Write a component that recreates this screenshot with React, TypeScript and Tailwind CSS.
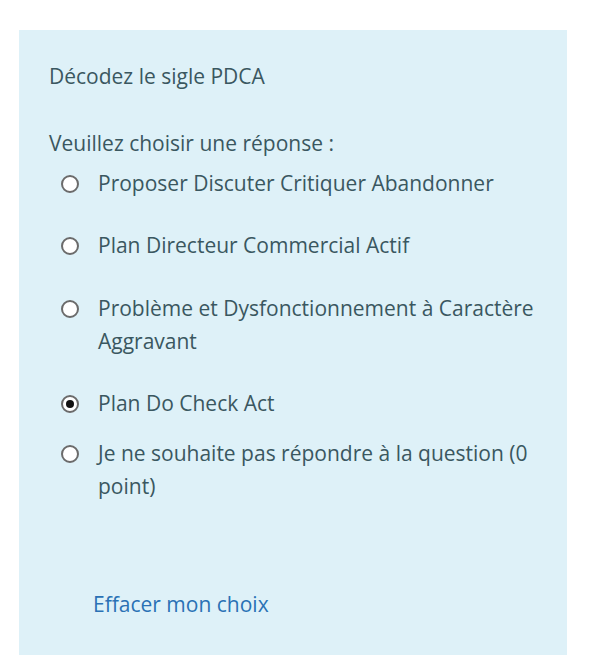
import React from "react";

const options = [
  { label: "Proposer Discuter Critiquer Abandonner", checked: false, mb: "mb-[29px]" },
  { label: "Plan Directeur Commercial Actif", checked: false, mb: "mb-[30px]" },
  { label: "Problème et Dysfonctionnement à Caractère Aggravant", checked: false, mb: "mb-[29px]" },
  { label: "Plan Do Check Act", checked: true, mb: "mb-[17px]" },
  { label: "Je ne souhaite pas répondre à la question (0 point)", checked: false, mb: "mb-0" },
];

function Radio({ checked }: { checked: boolean }) {
  return (
    <span className="mt-[8px] flex h-[18px] w-[18px] shrink-0 items-center justify-center rounded-full border-2 border-[#6b6b6b] bg-white">
      {checked && <span className="h-[8px] w-[8px] rounded-full bg-[#111]" />}
    </span>
  );
}

export default function App() {
  return (
    <div className="min-h-[665px] bg-white pt-[30px] font-['Open_Sans',sans-serif] text-[21px] leading-[33px] text-[#3a5760]">
      <div className="ml-[19px] h-[625px] w-[548px] bg-[#def1f8] pl-[30px] pr-[20px] pt-[30px]">
        <div>Décodez le sigle PDCA</div>
        <div className="mt-[34px]">Veuillez choisir une réponse :</div>
        <div className="mt-[7px] pl-[12px]">
          {options.map((o) => (
            <label key={o.label} className={`flex items-start gap-[19px] ${o.mb}`}>
              <Radio checked={o.checked} />
              <span>{o.label}</span>
            </label>
          ))}
        </div>
        <div className="mt-[85px] pl-[44px] text-[#2a71b5]">Effacer mon choix</div>
      </div>
    </div>
  );
}
